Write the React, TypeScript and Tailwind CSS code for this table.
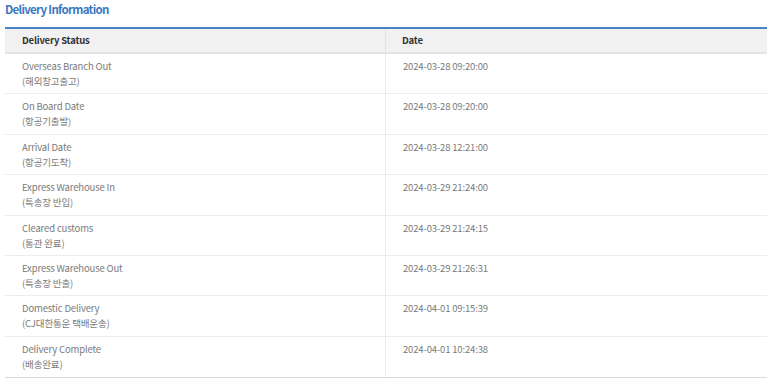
import React from "react";

const rows = [
  ["Overseas Branch Out", "(해외창고출고)", "2024-03-28 09:20:00"],
  ["On Board Date", "(항공기출발)", "2024-03-28 09:20:00"],
  ["Arrival Date", "(항공기도착)", "2024-03-28 12:21:00"],
  ["Express Warehouse In", "(특송장 반입)", "2024-03-29 21:24:00"],
  ["Cleared customs", "(통관 완료)", "2024-03-29 21:24:15"],
  ["Express Warehouse Out", "(특송장 반출)", "2024-03-29 21:26:31"],
  ["Domestic Delivery", "(CJ대한통운 택배운송)", "2024-04-01 09:15:39"],
  ["Delivery Complete", "(배송완료)", "2024-04-01 10:24:38"],
];

export default function App() {
  return (
    <div
      className="w-[773px] h-[387px] bg-white pl-[5px] pr-[6px]"
      style={{ fontFamily: '"Noto Sans CJK KR", "Noto Sans", sans-serif' }}
    >
      <h2 className="text-[11.5px] font-bold text-[#3a78c3] leading-[16px] h-[27px] pt-[1px] tracking-[-0.7px]">
        Delivery Information
      </h2>
      <div className="border-t-2 border-[#4a82c4] border-b border-b-[#d9d9d9]">
        <div className="flex bg-[#f1f1f1] border-b-2 border-[#e3e3e3] h-[25px] items-center text-[9.5px] font-bold text-[#333] tracking-[-0.2px]">
          <div className="w-[381px] pl-[17px] border-r border-[#e3e3e3] h-full flex items-center">Delivery Status</div>
          <div className="flex-1 pl-[16px]">Date</div>
        </div>
        {rows.map((r, i) => (
          <div
            key={i}
            className={`flex h-[40.4px] text-[9.5px] font-normal text-[#7a7a7a] tracking-[-0.15px] ${i < rows.length - 1 ? "border-b border-[#ececec]" : ""}`}
          >
            <div className="w-[381px] pl-[17px] border-r border-[#ececec] pt-[5px] leading-[15px]">
              <div>{r[0]}</div>
              <div>{r[1]}</div>
            </div>
            <div className="flex-1 pl-[17px] pt-[5px] leading-[15px]">{r[2]}</div>
          </div>
        ))}
      </div>
    </div>
  );
}
